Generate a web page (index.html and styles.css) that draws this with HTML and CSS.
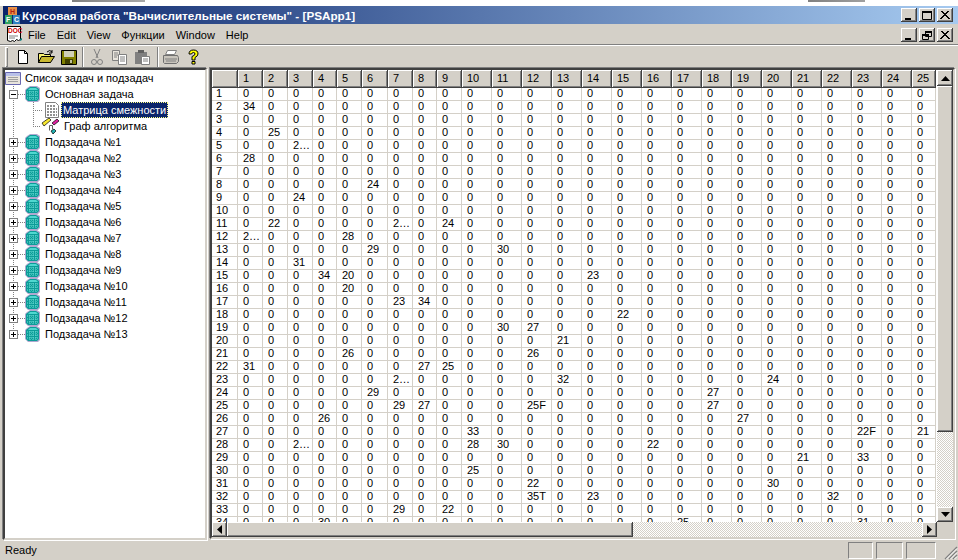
FILE: index.html
```html
<!DOCTYPE html>
<html lang="ru">
<head>
<meta charset="utf-8">
<title>PSApp</title>
<link rel="stylesheet" href="styles.css">
</head>
<body>
<svg class="defs" width="0" height="0">
  <symbol id="cube" viewBox="0 0 16 16">
    <path d="M5 0h7l3 2v12l-2 2H3l-3-3V4l2-2z" fill="#b0a8d0"/>
    <path d="M5 1h6l3 2v10l-2 2H3l-2-2V4z" fill="#0c9c98"/>
    <path d="M5 2h6l2 2H3z" fill="#50d8d0"/>
    <path d="M2 6h11M2 9h11M2 12h11M5 5v9M8 5v9M11 5v9" stroke="#70e0d8" stroke-width="1" stroke-dasharray="1 1"/>
  </symbol>
  <symbol id="plus" viewBox="0 0 9 9">
    <rect x=".5" y=".5" width="8" height="8" fill="#fff" stroke="#808080"/>
    <path d="M2 4.500h5M4.500 2v5" stroke="#000"/>
  </symbol>
  <symbol id="minus" viewBox="0 0 9 9">
    <rect x=".5" y=".5" width="8" height="8" fill="#fff" stroke="#808080"/>
    <path d="M2 4.500h5" stroke="#000"/>
  </symbol>
</svg>

<div class="backdrop"></div>
<div class="window">
  <div class="titlebar">
    <svg class="appicon" width="17" height="17" viewBox="0 0 17 17">
      <rect x="4" y="0" width="9" height="8" fill="#e89048"/><text x="6" y="7" class="applabel applabel-h">H</text>
      <rect x="1" y="8" width="7" height="9" fill="#30a060"/><text x="2" y="15" class="applabel">F</text>
      <rect x="9" y="8" width="7" height="9" fill="#3080c0"/><text x="10" y="15" class="applabel">C</text>
    </svg>
    <span class="titletext">Курсовая работа "Вычислительные системы" - [PSApp1]</span>
    <div class="winbtns">
      <button class="capbtn"><svg width="16" height="14"><path d="M4 10h6v2H4z"/></svg></button>
      <button class="capbtn"><svg width="16" height="14"><path d="M3.500 3.500h9v8h-9z" fill="none" stroke="#000"/><path d="M3 3h10v2H3z"/></svg></button>
      <button class="capbtn"><svg width="16" height="14"><path d="M4 3l8 8M12 3l-8 8M5 3l8 8M11 3l-8 8" stroke="#000" fill="none"/></svg></button>
    </div>
  </div>

  <div class="menubar">
    <svg class="docicon" width="17" height="17" viewBox="0 0 17 17">
      <path d="M1.500 .5h13v13l-2 1-2-1-2 2-2-1-2 1-3-1z" fill="#fff" stroke="#000"/>
      <path d="M14 13l2-1v2l-2 1z" fill="#108080"/>
      <text x="2" y="7" class="doctext">DOC</text>
      <path d="M3 10h9M3 12h6" stroke="#808080"/>
    </svg>
    <nav class="menus">
      <span>File</span><span>Edit</span><span>View</span><span>Функции</span><span>Window</span><span>Help</span>
    </nav>
    <div class="winbtns">
      <button class="capbtn"><svg width="16" height="14"><path d="M4 10h6v2H4z"/></svg></button>
      <button class="capbtn"><svg width="16" height="14"><path d="M6.500 3.500h6v5h-6zM3.500 6.500h6v5h-6z" fill="#d4d0c8" stroke="#000"/><path d="M6 3h7v2H6zM3 6h7v2H3z"/></svg></button>
      <button class="capbtn"><svg width="16" height="14"><path d="M4 3l8 8M12 3l-8 8M5 3l8 8M11 3l-8 8" stroke="#000" fill="none"/></svg></button>
    </div>
  </div>

  <div class="toolbar">
    <i class="gripper"></i>
    <span class="tool">
      <svg width="16" height="16"><path d="M3.500 1.500h6l3 3v10h-9z" fill="#fff" stroke="#000"/><path d="M9.500 1.500v3h3" fill="none" stroke="#000"/></svg>
    </span>
    <span class="tool">
      <svg width="18" height="16"><path d="M1.500 4.500h5l1 1h6v8h-12z" fill="#f8f070" stroke="#000"/><path d="M1.500 13.500l3-6h13l-4 6z" fill="#c8b830" stroke="#000"/><path d="M10 3q3-3 5 0M15 1v3h-3" fill="none" stroke="#000"/></svg>
    </span>
    <span class="tool">
      <svg width="16" height="16"><path d="M.5 1.500h15v14H.5z" fill="#808000" stroke="#000"/><path d="M3 2h10v6H3z" fill="#d0d0b8"/><path d="M4 10h8v5H4z" fill="#404000"/><path d="M9 11h2v3H9z" fill="#c0c0a0"/></svg>
    </span>
    <i class="toolsep"></i>
    <span class="tool tool-narrow">
      <svg width="12" height="18"><path d="M3 1l4 9M9 1L5 10" stroke="#808080" fill="none"/><circle cx="3" cy="14" r="2.500" fill="none" stroke="#808080"/><circle cx="9" cy="14" r="2.500" fill="none" stroke="#808080"/></svg>
    </span>
    <span class="tool">
      <svg width="16" height="16"><path d="M1.500 1.500h7v10h-7z" fill="#e8e4dc" stroke="#808080"/><path d="M7.500 5.500h8v10h-8z" fill="#fff" stroke="#808080"/><path d="M3 4h4M3 6h4M3 8h3M9 8h5M9 10h5M9 12h5" stroke="#808080"/></svg>
    </span>
    <span class="tool">
      <svg width="16" height="16"><path d="M1 3h12v12H1z" fill="#808080"/><path d="M4 1h6v3H4z" fill="#606060"/><path d="M7.500 7.500h8v8h-8z" fill="#fff" stroke="#808080"/><path d="M9 10h5M9 12h5" stroke="#808080"/></svg>
    </span>
    <i class="toolsep toolsep2"></i>
    <span class="tool">
      <svg width="18" height="16"><path d="M5.500 1.500h9l-2 4h-9z" fill="#fff" stroke="#808080"/><path d="M1.500 6.500h14l1 2v4l-2 2h-12l-1-1z" fill="#c8c4bc" stroke="#707070"/><path d="M3 10h12M4 12h10" stroke="#808080"/></svg>
    </span>
    <span class="tool">
      <svg width="13" height="18"><path d="M2 6q0-4 4.500-4T11 6q0 2-3 3.500V12H5V8.500q3-1 3-2.500T6.500 4.500 4.500 6z" fill="#ffff00" stroke="#000"/><path d="M5 13.500h3V16H5z" fill="#ffff00" stroke="#000"/></svg>
    </span>
  </div>

  <main class="panes">
    <section class="tree">
      <div class="tree-root">
        <svg width="17" height="15" viewBox="0 0 17 15"><path d="M.5 1.500h15v12H.5z" fill="#e8e4dc" stroke="#6868b0"/><path d="M1 2h14v3H1z" fill="#b8c0e8"/><path d="M3 6.500h10M3 8.500h10M3 10.500h10" stroke="#a0a0a0"/></svg>
        <span>Список задач и подзадач</span>
      </div>
      <div class="tree-list">
        <div class="node"><svg class="exp" width="9" height="9"><use href="#minus"/></svg><i class="dash"></i><svg class="nodeicon" width="16" height="16"><use href="#cube"/></svg><span>Основная задача</span></div>
        <div class="leafs">
          <div class="leaf"><i class="dash2"></i>
            <svg class="leaficon" width="16" height="16" viewBox="0 0 16 16"><path d="M1.500 .5h10l3 3v12h-13z" fill="#fff" stroke="#808080"/><path d="M3 3h2v2H3zM6 3h2v2H6zM9 3h2v2H9zM3 6h2v2H3zM6 6h2v2H6zM9 6h2v2H9zM12 6h1v2h-1zM3 9h2v2H3zM6 9h2v2H6zM9 9h2v2H9zM12 9h1v2h-1zM3 12h2v2H3zM6 12h2v2H6zM9 12h2v2H9zM12 12h1v2h-1z" fill="#909090"/></svg>
            <span class="selected">Матрица смежности</span></div>
          <div class="leaf"><i class="dash2 dash2-short"></i>
            <svg class="graphicon" width="19" height="18" viewBox="0 0 19 18"><path d="M1 6l7-5 2 2-7 6z" fill="#f8e830" stroke="#000" stroke-width=".7"/><path d="M11 6l5-4 2 2-5 4z" fill="#e020a0" stroke="#000" stroke-width=".7"/><path d="M10 14l3-2 2 2-3 3z" fill="#20b0b0" stroke="#000" stroke-width=".7"/><path d="M8.500 8.500h3v4M8.500 8.500v5" stroke="#606060" fill="none"/></svg>
            <span class="leaftext">Граф алгоритма</span></div>
        </div>
        <div class="node"><svg class="exp" width="9" height="9"><use href="#plus"/></svg><i class="dash"></i><svg class="nodeicon" width="16" height="16"><use href="#cube"/></svg><span>Подзадача №1</span></div>
        <div class="node"><svg class="exp" width="9" height="9"><use href="#plus"/></svg><i class="dash"></i><svg class="nodeicon" width="16" height="16"><use href="#cube"/></svg><span>Подзадача №2</span></div>
        <div class="node"><svg class="exp" width="9" height="9"><use href="#plus"/></svg><i class="dash"></i><svg class="nodeicon" width="16" height="16"><use href="#cube"/></svg><span>Подзадача №3</span></div>
        <div class="node"><svg class="exp" width="9" height="9"><use href="#plus"/></svg><i class="dash"></i><svg class="nodeicon" width="16" height="16"><use href="#cube"/></svg><span>Подзадача №4</span></div>
        <div class="node"><svg class="exp" width="9" height="9"><use href="#plus"/></svg><i class="dash"></i><svg class="nodeicon" width="16" height="16"><use href="#cube"/></svg><span>Подзадача №5</span></div>
        <div class="node"><svg class="exp" width="9" height="9"><use href="#plus"/></svg><i class="dash"></i><svg class="nodeicon" width="16" height="16"><use href="#cube"/></svg><span>Подзадача №6</span></div>
        <div class="node"><svg class="exp" width="9" height="9"><use href="#plus"/></svg><i class="dash"></i><svg class="nodeicon" width="16" height="16"><use href="#cube"/></svg><span>Подзадача №7</span></div>
        <div class="node"><svg class="exp" width="9" height="9"><use href="#plus"/></svg><i class="dash"></i><svg class="nodeicon" width="16" height="16"><use href="#cube"/></svg><span>Подзадача №8</span></div>
        <div class="node"><svg class="exp" width="9" height="9"><use href="#plus"/></svg><i class="dash"></i><svg class="nodeicon" width="16" height="16"><use href="#cube"/></svg><span>Подзадача №9</span></div>
        <div class="node"><svg class="exp" width="9" height="9"><use href="#plus"/></svg><i class="dash"></i><svg class="nodeicon" width="16" height="16"><use href="#cube"/></svg><span>Подзадача №10</span></div>
        <div class="node"><svg class="exp" width="9" height="9"><use href="#plus"/></svg><i class="dash"></i><svg class="nodeicon" width="16" height="16"><use href="#cube"/></svg><span>Подзадача №11</span></div>
        <div class="node"><svg class="exp" width="9" height="9"><use href="#plus"/></svg><i class="dash"></i><svg class="nodeicon" width="16" height="16"><use href="#cube"/></svg><span>Подзадача №12</span></div>
        <div class="node"><svg class="exp" width="9" height="9"><use href="#plus"/></svg><i class="dash"></i><svg class="nodeicon" width="16" height="16"><use href="#cube"/></svg><span>Подзадача №13</span></div>
      </div>
    </section>

    <section class="gridpane">
      <div class="gridview"><div class="matrix" id="matrix"></div></div>
      <div class="vbar">
        <button class="sbtn"><svg width="9" height="5"><path d="M4.500 0L9 5H0z"/></svg></button>
        <div class="vthumb"></div>
        <div class="track"></div>
        <button class="sbtn"><svg width="9" height="5"><path d="M0 0h9L4.500 5z"/></svg></button>
      </div>
      <div class="hbar">
        <button class="sbtn"><svg width="5" height="9"><path d="M5 0v9L0 4.500z"/></svg></button>
        <div class="hthumb"></div>
        <div class="track"></div>
        <button class="sbtn"><svg width="5" height="9"><path d="M0 0v9l5-4.500z"/></svg></button>
      </div>
      <div class="corner"></div>
    </section>
  </main>

  <footer class="statusbar">
    <span class="ready">Ready</span>
    <i class="stat stat1"></i><i class="stat stat2"></i><i class="stat stat3"></i>
    <svg class="grip" width="15" height="15"><path d="M14 2L2 14M14 6L6 14M14 10l-4 4" stroke="#808080" stroke-width="1.400"/><path d="M14 3.500L3.500 14M14 7.500L7.500 14M14 11.500L11.500 14" stroke="#fff"/></svg>
  </footer>
</div>
<script src="script.js"></script>
</body>
</html>
```
FILE: styles.css
```css
* { box-sizing: border-box; }
html, body { margin: 0; padding: 0; }
body {
  width: 958px;
  height: 560px;
  overflow: hidden;
  background: #d4d0c8;
  color: #000;
  font: 11px "Liberation Sans", sans-serif;
}
.defs { position: absolute; }
i { display: block; font-style: normal; }

.backdrop {
  height: 6px;
  background:
    linear-gradient(90deg, transparent 72px, #808080 72px, #a8a8a8 145px, transparent 145px, transparent 808px, #808080 808px, #a0a0a0 865px, transparent 865px) top / 100% 2px no-repeat,
    #fff;
}
.window { height: 554px; display: flex; flex-direction: column; }

.titlebar {
  height: 18px;
  margin-left: 3px;
  display: flex;
  align-items: center;
  background: linear-gradient(90deg, #0a246a, #a6caf0);
}
.appicon { margin: 0 1px 0 1px; flex: none; overflow: visible; }
.applabel { font: bold 7px "Liberation Sans", sans-serif; fill: #fff; }
.applabel-h { fill: #b02010; }
.titletext {
  color: #fff;
  font: bold 11.700px "Liberation Sans", sans-serif;
  white-space: nowrap;
}
.winbtns { margin-left: auto; display: flex; gap: 2px; padding-right: 5px; }
.capbtn, .sbtn {
  padding: 0;
  border: 0;
  display: flex;
  align-items: center;
  justify-content: center;
  background: #d4d0c8;
  box-shadow: inset -1px -1px #404040, inset 1px 1px #fff, inset -2px -2px #808080;
}
.capbtn { width: 16px; height: 14px; }

.menubar {
  height: 20px;
  margin-top: 1px;
  padding-left: 6px;
  display: flex;
  align-items: center;
  border-bottom: 1px solid #808080;
}
.docicon { flex: none; }
.doctext { font: bold 6.500px "Liberation Sans", sans-serif; fill: #d00000; }
.menus { margin-left: 5px; display: flex; gap: 11px; }

.toolbar {
  height: 23px;
  display: flex;
  align-items: center;
  padding-left: 5px;
  border-top: 1px solid #fff;
}
.gripper {
  width: 3px;
  height: 20px;
  margin-right: 3px;
  background: #d4d0c8;
  box-shadow: inset 1px 1px #fff, inset -1px -1px #808080;
}
.tool { width: 23px; height: 22px; display: flex; align-items: center; justify-content: center; flex: none; }
.tool-narrow { width: 21px; }
.toolsep { width: 2px; height: 20px; margin: 0 2px; background: linear-gradient(90deg, #808080 50%, #fff 50%); flex: none; }
.toolsep2 { margin: 0 0 0 4px; }

.panes { flex: 1; min-height: 0; display: flex; padding: 0 3px; gap: 3px; }

.tree {
  width: 204px;
  flex: none;
  background: #fff;
  border: 2px solid;
  border-color: #404040 #d4d0c8 #d4d0c8 #404040;
  box-shadow: 1px 1px #fff, -1px -1px #808080;
  overflow: hidden;
}
.tree-root { height: 16px; display: flex; align-items: center; gap: 3px; white-space: nowrap; }
.tree-list {
  padding-left: 4px;
  background: repeating-linear-gradient(#808080 0 1px, transparent 1px 2px) 8px 0 / 1px 250px no-repeat;
}
.node { height: 16px; display: flex; align-items: center; white-space: nowrap; }
.exp { flex: none; background: #fff; }
.dash { width: 7px; border-top: 1px dotted #808080; flex: none; }
.nodeicon { flex: none; margin-right: 4px; }
.leafs {
  height: 32px;
  margin-left: 24px;
  padding-left: 4px;
  background: repeating-linear-gradient(#808080 0 1px, transparent 1px 2px) 0 0 / 1px 25px no-repeat;
}
.leaf { height: 16px; display: flex; align-items: center; white-space: nowrap; }
.dash2 { width: 9px; border-top: 1px dotted #808080; flex: none; margin-left: -4px; margin-right: 2px; }
.dash2-short { width: 7px; margin-right: 1px; }
.leaficon { flex: none; margin-right: 1px; }
.graphicon { flex: none; margin-right: 4px; }
.selected {
  background: #0a246a;
  color: #fff;
  padding: 1px 2px;
  outline: 1px dotted #ffff80;
  outline-offset: -1px;
  line-height: 14px;
}

.gridpane {
  flex: none;
  width: 745px;
  height: 471px;
  display: grid;
  grid-template-columns: 725px 16px;
  grid-template-rows: 452px 15px;
  align-content: start;
  border: 2px solid;
  border-color: #404040 #d4d0c8 #d4d0c8 #404040;
  box-shadow: 1px 1px #fff, -1px -1px #808080;
}
.gridview { overflow: hidden; background: #fff; }
.matrix {
  display: grid;
  grid-template-columns: 26px 25px 25px 25px 24px 25px 26px 25px 24px 25px repeat(15, 30px) 24px;
  grid-auto-rows: 13px;
  grid-template-rows: 18px;
}
.hd {
  background: #d4d0c8;
  padding: 2px 0 0 5px;
  line-height: 13px;
  box-shadow: inset -1px -1px #404040, inset 1px 1px #fff, inset -2px -2px #808080;
  overflow: hidden;
}
.cell {
  border-right: 1px solid #d4d0c8;
  border-bottom: 1px solid #d4d0c8;
  padding-left: 5px;
  line-height: 11px;
  overflow: hidden;
  white-space: nowrap;
}
.rowlabel { padding-left: 4px; }

.vbar { display: flex; flex-direction: column; }
.hbar { display: flex; }
.vbar .sbtn { width: 16px; height: 16px; flex: none; }
.vbar .sbtn:last-child { height: 15px; }
.hbar .sbtn { width: 15px; height: 15px; flex: none; }
.vthumb, .hthumb {
  background: #d4d0c8;
  box-shadow: inset -1px -1px #404040, inset 1px 1px #fff, inset -2px -2px #808080;
  flex: none;
}
.vthumb { height: 346px; }
.hthumb { width: 406px; }
.track {
  flex: 1;
  background: repeating-conic-gradient(#d4d0c8 0 25%, #fff 0 50%) 0 0 / 2px 2px;
}

.statusbar { height: 20px; display: flex; align-items: center; flex: none; padding-left: 5px; }
.ready { margin-right: auto; font-size: 11px; }
.stat { height: 17px; border: 1px solid; border-color: #808080 #fff #fff #808080; flex: none; }
.stat1 { width: 25px; margin-right: 3px; }
.stat2 { width: 27px; margin-right: 3px; }
.stat3 { width: 30px; margin-right: 7px; }
.grip { flex: none; align-self: flex-end; }
```
FILE: script.js
```js
var values = {
  "2:1":"34","4:2":"25","5:3":"2…","6:1":"28","8:6":"24","9:3":"24",
  "11:2":"22","11:7":"2…","11:9":"24","12:1":"2…","12:5":"28",
  "13:6":"29","13:11":"30","14:3":"31","15:4":"34","15:5":"20","15:14":"23",
  "16:5":"20","17:7":"23","17:8":"34","18:15":"22","19:11":"30","19:12":"27",
  "20:13":"21","21:5":"26","21:12":"26","22:1":"31","22:8":"27","22:9":"25",
  "23:7":"2…","23:13":"32","23:20":"24","24:6":"29","24:18":"27",
  "25:7":"29","25:8":"27","25:12":"25F","25:18":"27","26:4":"26","26:19":"27",
  "27:10":"33","27:23":"22F","27:25":"21","28:3":"2…","28:10":"28","28:11":"30","28:16":"22",
  "29:21":"21","29:23":"33","30:10":"25","31:12":"22","31:20":"30",
  "32:12":"35T","32:14":"23","32:22":"32","33:7":"29","33:9":"22",
  "34:4":"30","34:17":"25","34:23":"31"
};
var matrix = document.getElementById("matrix");
function add(cls, text) {
  var el = document.createElement("div");
  el.className = cls;
  el.textContent = text;
  matrix.appendChild(el);
}
add("hd", "");
for (var c = 1; c <= 25; c++) add("hd", String(c));
for (var r = 1; r <= 34; r++) {
  add("cell rowlabel", String(r));
  for (var k = 1; k <= 25; k++) add("cell", values[r + ":" + k] || "0");
}
```
